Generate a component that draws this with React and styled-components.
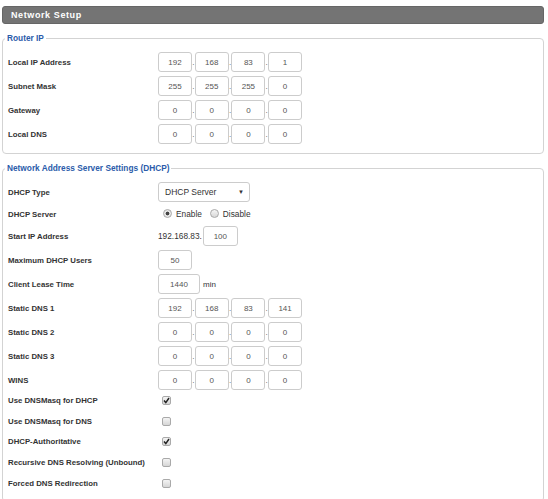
import React from "react"
import styled, { createGlobalStyle } from "styled-components"

const GlobalStyle = createGlobalStyle`
  html, body {
    margin: 0;
    padding: 0;
    background: #fff;
  }
  body {
    font-family: "Liberation Sans", Arial, sans-serif;
  }
`

const Page = styled.div`
  padding: 6px 4px 0 2px;
`

const Header = styled.div`
  height: 18px;
  box-sizing: border-box;
  display: flex;
  align-items: center;
  padding-left: 8px;
  background: #747474;
  border: 1px solid #666;
  border-radius: 3px;
  color: #fff;
  font-size: 9px;
  font-weight: bold;
  letter-spacing: 0.6px;
`

const Section = styled.fieldset`
  margin: 9px 0 0;
  padding: 8px 5px 9px;
  min-width: 0;
  border: 1px solid #d3d3d3;
  border-radius: 4px;
`

const Legend = styled.legend`
  margin-left: -3px;
  padding: 0 2px;
  color: #2b5caa;
  font-size: 8.3px;
  font-weight: bold;
  line-height: 11px;
`

const Rows = styled.div`
  display: flex;
  flex-direction: column;
  gap: 4px;
`

const Row = styled.div`
  display: flex;
  align-items: center;
  height: ${p => p.$h || 20}px;
`

const Label = styled.div`
  width: 150px;
  flex: none;
  color: #333;
  font-size: 7.8px;
  font-weight: bold;
`

const IpGroup = styled.div`
  display: flex;
  align-items: baseline;
`

const Box = styled.input`
  box-sizing: border-box;
  width: ${p => p.$w || 34}px;
  height: 20px;
  margin: 0;
  padding: 0;
  border: 1px solid #ccc;
  border-radius: 3px;
  background: #fff;
  color: #555;
  font: 8px "Liberation Sans", Arial, sans-serif;
  text-align: center;
  outline: none;
`

const Dot = styled.span`
  width: 2.7px;
  flex: none;
  color: #555;
  font-size: 8px;
  text-align: center;
`

const Select = styled.div`
  box-sizing: border-box;
  width: 92px;
  height: 20px;
  display: flex;
  align-items: center;
  justify-content: space-between;
  padding: 0 5px 0 6px;
  border: 1px solid #ccc;
  border-radius: 3px;
  color: #333;
  font-size: 8.5px;
`

const Arrow = styled.span`
  font-size: 6px;
  color: #333;
`

const Option = styled.label`
  display: flex;
  align-items: center;
  gap: 4px;
  margin-left: ${p => p.$ml || 0}px;
  color: #333;
  font-size: 8.3px;
`

const Radio = styled.span`
  box-sizing: border-box;
  width: 9px;
  height: 9px;
  margin-top: -2px;
  border: 1px solid #a9a9a9;
  border-radius: 50%;
  background: ${p =>
    p.$on
      ? "radial-gradient(circle, #444 0 1.6px, #e8e8e8 2.2px)"
      : "linear-gradient(#f6f6f6, #d8d8d8)"};
`

const Text = styled.span`
  color: #333;
  font-size: ${p => p.$size || 8.3}px;
  margin: ${p => p.$m || "0"};
`

const CheckList = styled.div`
  display: flex;
  flex-direction: column;
  gap: 4px;
  margin-top: -2px;
`

const CheckBox = styled.span`
  box-sizing: border-box;
  width: 9px;
  height: 9px;
  margin-left: 4px;
  display: flex;
  align-items: center;
  justify-content: center;
  border: 1px solid #a9a9a9;
  border-radius: 2px;
  background: linear-gradient(#f4f4f4, #d6d6d6);
`

function Check({ on }) {
  return (
    <CheckBox>
      {on && (
        <svg width="7" height="7" viewBox="0 0 7 7">
          <path d="M1 3.6 L2.8 5.6 L6 1" fill="none" stroke="#222" strokeWidth="1.5" />
        </svg>
      )}
    </CheckBox>
  )
}

function Ip({ parts }) {
  return (
    <IpGroup>
      {parts.map((p, i) => (
        <React.Fragment key={i}>
          {i > 0 && <Dot>.</Dot>}
          <Box value={p} readOnly />
        </React.Fragment>
      ))}
    </IpGroup>
  )
}

const routerRows = [
  ["Local IP Address", ["192", "168", "83", "1"]],
  ["Subnet Mask", ["255", "255", "255", "0"]],
  ["Gateway", ["0", "0", "0", "0"]],
  ["Local DNS", ["0", "0", "0", "0"]],
]

const dnsRows = [
  ["Static DNS 1", ["192", "168", "83", "141"]],
  ["Static DNS 2", ["0", "0", "0", "0"]],
  ["Static DNS 3", ["0", "0", "0", "0"]],
  ["WINS", ["0", "0", "0", "0"]],
]

const checks = [
  ["Use DNSMasq for DHCP", true],
  ["Use DNSMasq for DNS", false],
  ["DHCP-Authoritative", true],
  ["Recursive DNS Resolving (Unbound)", false],
  ["Forced DNS Redirection", false],
]

export default function App() {
  return (
    <>
      <GlobalStyle />
      <Page>
        <Header>Network Setup</Header>

        <Section>
          <Legend>Router IP</Legend>
          <Rows>
            {routerRows.map(([label, parts]) => (
              <Row key={label}>
                <Label>{label}</Label>
                <Ip parts={parts} />
              </Row>
            ))}
          </Rows>
        </Section>

        <Section>
          <Legend>Network Address Server Settings (DHCP)</Legend>
          <Rows>
            <Row>
              <Label>DHCP Type</Label>
              <Select>
                DHCP Server
                <Arrow>▼</Arrow>
              </Select>
            </Row>
            <Row $h={16}>
              <Label>DHCP Server</Label>
              <Option $ml={5}>
                <Radio $on />
                Enable
              </Option>
              <Option $ml={8}>
                <Radio />
                Disable
              </Option>
            </Row>
            <Row>
              <Label>Start IP Address</Label>
              <Text $m="0 1px 0 0">192.168.83.</Text>
              <Box $w={35} value="100" readOnly />
            </Row>
            <Row>
              <Label>Maximum DHCP Users</Label>
              <Box value="50" readOnly />
            </Row>
            <Row>
              <Label>Client Lease Time</Label>
              <Box $w={42} value="1440" readOnly />
              <Text $size={8} $m="0 0 0 3px">min</Text>
            </Row>
            {dnsRows.map(([label, parts]) => (
              <Row key={label}>
                <Label>{label}</Label>
                <Ip parts={parts} />
              </Row>
            ))}
            <CheckList>
              {checks.map(([label, on]) => (
                <Row key={label} $h={16.8}>
                  <Label>{label}</Label>
                  <Check on={on} />
                </Row>
              ))}
            </CheckList>
          </Rows>
        </Section>
      </Page>
    </>
  )
}
